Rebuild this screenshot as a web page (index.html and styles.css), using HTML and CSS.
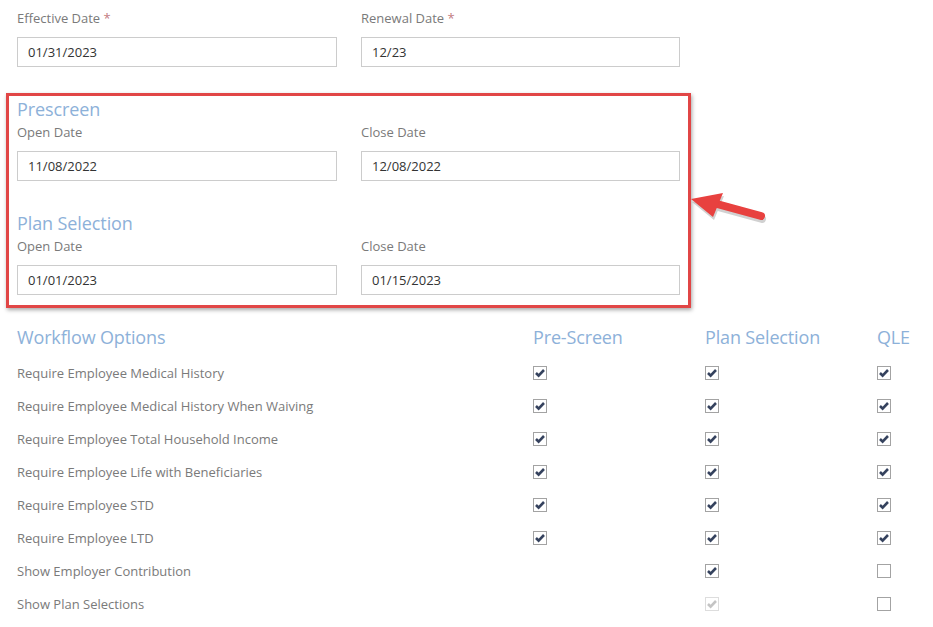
FILE: index.html
```html
<!DOCTYPE html>
<html lang="en">
<head>
    <meta charset="UTF-8">
    <meta name="viewport" content="width=device-width, initial-scale=1.0">
    <title>Enrollment Settings</title>
    <link rel="stylesheet" href="styles.css">
</head>
<body>
    <div class="page">
        <div class="field-row">
            <div class="field">
                <label>Effective Date <span class="req">*</span></label>
                <div class="input">01/31/2023</div>
            </div>
            <div class="field">
                <label>Renewal Date <span class="req">*</span></label>
                <div class="input">12/23</div>
            </div>
        </div>

        <div class="highlight">
            <h2>Prescreen</h2>
            <div class="field-row">
                <div class="field">
                    <label>Open Date</label>
                    <div class="input">11/08/2022</div>
                </div>
                <div class="field">
                    <label>Close Date</label>
                    <div class="input">12/08/2022</div>
                </div>
            </div>

            <h2 class="second">Plan Selection</h2>
            <div class="field-row">
                <div class="field">
                    <label>Open Date</label>
                    <div class="input">01/01/2023</div>
                </div>
                <div class="field">
                    <label>Close Date</label>
                    <div class="input">01/15/2023</div>
                </div>
            </div>

            <svg class="arrow" width="90" height="44" viewBox="0 0 90 44">
                <g transform="translate(1,3)" fill="#9a9a9a" stroke="#9a9a9a" opacity="0.45">
                    <path d="M31 18 L75 30" stroke-width="8" stroke-linecap="round" fill="none"/>
                    <path d="M5 13 L37 7 L27 31 Z" stroke="none"/>
                </g>
                <path d="M31 18 L75 30" stroke="#e8413f" stroke-width="8" stroke-linecap="round" fill="none"/>
                <path d="M5 13 L37 7 L27 31 Z" fill="#e8413f"/>
            </svg>
        </div>

        <div class="options">
            <div class="opt-head">Workflow Options</div>
            <div class="opt-head">Pre-Screen</div>
            <div class="opt-head">Plan Selection</div>
            <div class="opt-head">QLE</div>

            <div class="opt-label">Require Employee Medical History</div>
            <div><span class="cb on"></span></div>
            <div><span class="cb on"></span></div>
            <div><span class="cb on"></span></div>

            <div class="opt-label">Require Employee Medical History When Waiving</div>
            <div><span class="cb on"></span></div>
            <div><span class="cb on"></span></div>
            <div><span class="cb on"></span></div>

            <div class="opt-label">Require Employee Total Household Income</div>
            <div><span class="cb on"></span></div>
            <div><span class="cb on"></span></div>
            <div><span class="cb on"></span></div>

            <div class="opt-label">Require Employee Life with Beneficiaries</div>
            <div><span class="cb on"></span></div>
            <div><span class="cb on"></span></div>
            <div><span class="cb on"></span></div>

            <div class="opt-label">Require Employee STD</div>
            <div><span class="cb on"></span></div>
            <div><span class="cb on"></span></div>
            <div><span class="cb on"></span></div>

            <div class="opt-label">Require Employee LTD</div>
            <div><span class="cb on"></span></div>
            <div><span class="cb on"></span></div>
            <div><span class="cb on"></span></div>

            <div class="opt-label">Show Employer Contribution</div>
            <div></div>
            <div><span class="cb on"></span></div>
            <div><span class="cb"></span></div>

            <div class="opt-label">Show Plan Selections</div>
            <div></div>
            <div><span class="cb on disabled"></span></div>
            <div><span class="cb"></span></div>
        </div>
    </div>
</body>
</html>
```

FILE: styles.css
```css
body {
    margin: 0;
    background: #fff;
    font-family: "Open Sans", "Liberation Sans", sans-serif;
    font-size: 13px;
    color: #7a7a7a;
}
.page {
    padding: 9px 0 0 17px;
}
.field-row {
    display: grid;
    grid-template-columns: 320px 319px;
    column-gap: 24px;
}
.field label {
    display: block;
    line-height: 18px;
    margin-bottom: 10px;
}
.req {
    color: #c27b80;
}
.input {
    height: 28px;
    line-height: 28px;
    border: 1px solid #ccc;
    padding: 0 10px;
    color: #333;
    font-size: 13px;
}
h2 {
    margin: 0 0 4px 0;
    font-size: 18px;
    font-weight: normal;
    line-height: 20px;
    color: #8db1d9;
    letter-spacing: -0.1px;
}
h2.second {
    margin-top: 32px;
}
.highlight {
    position: relative;
    width: 663px;
    margin: 26px 0 0 -11px;
    padding: 3px 8px 10px 8px;
    border: 3px solid #e14646;
    box-shadow: 1px 2px 4px rgba(0,0,0,0.35);
}
.arrow {
    position: absolute;
    left: 677px;
    top: 90px;
}
.options {
    display: grid;
    grid-template-columns: 516px 172px 172px auto;
    grid-template-rows: 29px;
    grid-auto-rows: 33px;
    margin-top: 19px;
}
.options > div {
    display: flex;
    align-items: center;
}
.options > .opt-head {
    align-items: flex-start;
    font-size: 18px;
    line-height: 20px;
    color: #8db1d9;
    letter-spacing: -0.15px;
}
.cb {
    display: inline-block;
    box-sizing: border-box;
    width: 14px;
    height: 14px;
    border: 1px solid #a3a3a3;
    background: #fff;
}
.cb.on {
    background: #fff url("data:image/svg+xml,%3Csvg xmlns='http://www.w3.org/2000/svg' width='12' height='12' viewBox='0 0 12 12'%3E%3Cpath d='M2 6 L4.6 8.6 L10 3' fill='none' stroke='%2335425e' stroke-width='2.6'/%3E%3C/svg%3E") no-repeat center;
}
.cb.disabled {
    border-color: #ddd;
    background: #fff url("data:image/svg+xml,%3Csvg xmlns='http://www.w3.org/2000/svg' width='12' height='12' viewBox='0 0 12 12'%3E%3Cpath d='M2 6 L4.6 8.6 L10 3' fill='none' stroke='%23c4c4c4' stroke-width='2.6'/%3E%3C/svg%3E") no-repeat center;
}
```
